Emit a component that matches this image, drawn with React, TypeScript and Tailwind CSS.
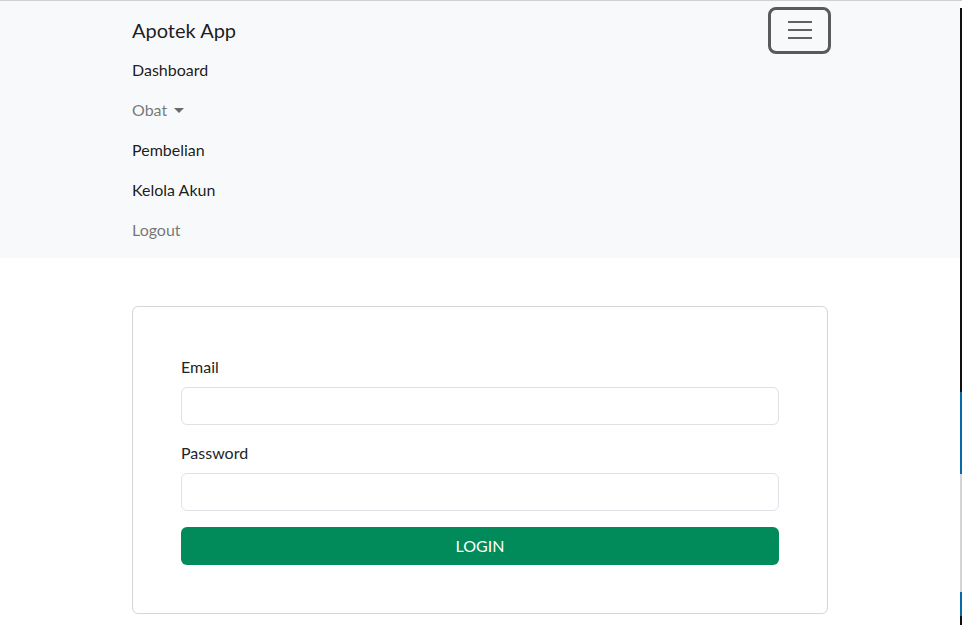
import React from "react";

const links = [
  { label: "Dashboard", dim: false },
  { label: "Obat", dim: true, caret: true },
  { label: "Pembelian", dim: false },
  { label: "Kelola Akun", dim: false },
  { label: "Logout", dim: true },
];

export default function App() {
  return (
    <div className="flex min-h-[625px] bg-white font-['Lato',sans-serif] text-[#212529]">
      <div className="flex-1 flex flex-col">
        <div className="h-px bg-[#d0d0d0]" />
        <nav className="bg-[#f8f9fa] pt-[9px] pb-2">
          <div className="w-[720px] mx-auto px-3">
            <div className="h-10 flex items-center justify-between">
              <span className="text-[20px] leading-[30px] text-black/90">Apotek App</span>
              {/* toggler with focus ring */}
              <div className="w-[63px] h-[47px] -my-[4px] -mr-[3px] border-[3px] border-[#5a5a5a] rounded-[8px] flex items-center justify-center">
                <div className="flex flex-col gap-[6px]">
                  <span className="block w-6 h-[2px] bg-[#5f6265]" />
                  <span className="block w-6 h-[2px] bg-[#5f6265]" />
                  <span className="block w-6 h-[2px] bg-[#5f6265]" />
                </div>
              </div>
            </div>
            <ul className="flex flex-col">
              {links.map((l) => (
                <li key={l.label} className="py-2 leading-6 text-base">
                  <span className={`inline-flex items-center ${l.dim ? "text-black/55" : "text-black/90"}`}>
                    {l.label}
                    {l.caret && (
                      <span className="ml-[7px] inline-block w-0 h-0 border-x-[5px] border-x-transparent border-t-[5px] border-t-[#6b6b6b]" />
                    )}
                  </span>
                </li>
              ))}
            </ul>
          </div>
        </nav>

        <div className="w-[720px] mx-auto px-3 mt-12">
          <div className="border border-[#d6d6d6] rounded-[6px] p-4">
            <form className="p-8" onSubmit={(e) => e.preventDefault()}>
              <div className="mb-4">
                <label className="block mb-2 leading-6 text-base">Email</label>
                <input
                  type="email"
                  className="block w-full h-[38px] px-3 border border-[#dee2e6] rounded-[6px] bg-white outline-none"
                />
              </div>
              <div className="mb-4">
                <label className="block mb-2 leading-6 text-base">Password</label>
                <input
                  type="password"
                  className="block w-full h-[38px] px-3 border border-[#dee2e6] rounded-[6px] bg-white outline-none"
                />
              </div>
              <button
                type="submit"
                className="w-full h-[38px] rounded-[6px] bg-[#018a5a] text-white text-base leading-6"
              >
                LOGIN
              </button>
            </form>
          </div>
        </div>
      </div>

      {/* edge of the next window */}
      <div className="w-[2px] flex flex-col">
        <div className="h-px bg-[#d0d0d0]" />
        <div className="h-[7px] bg-white" />
        <div className="h-[384px] bg-[#111111]" />
        <div className="h-[82px] bg-[#0a6aa6]" />
        <div className="h-[118px] bg-[#d4d4d4]" />
        <div className="h-[24px] bg-[#0a6aa6]" />
        <div className="flex-1 bg-[#111111]" />
      </div>
    </div>
  );
}
